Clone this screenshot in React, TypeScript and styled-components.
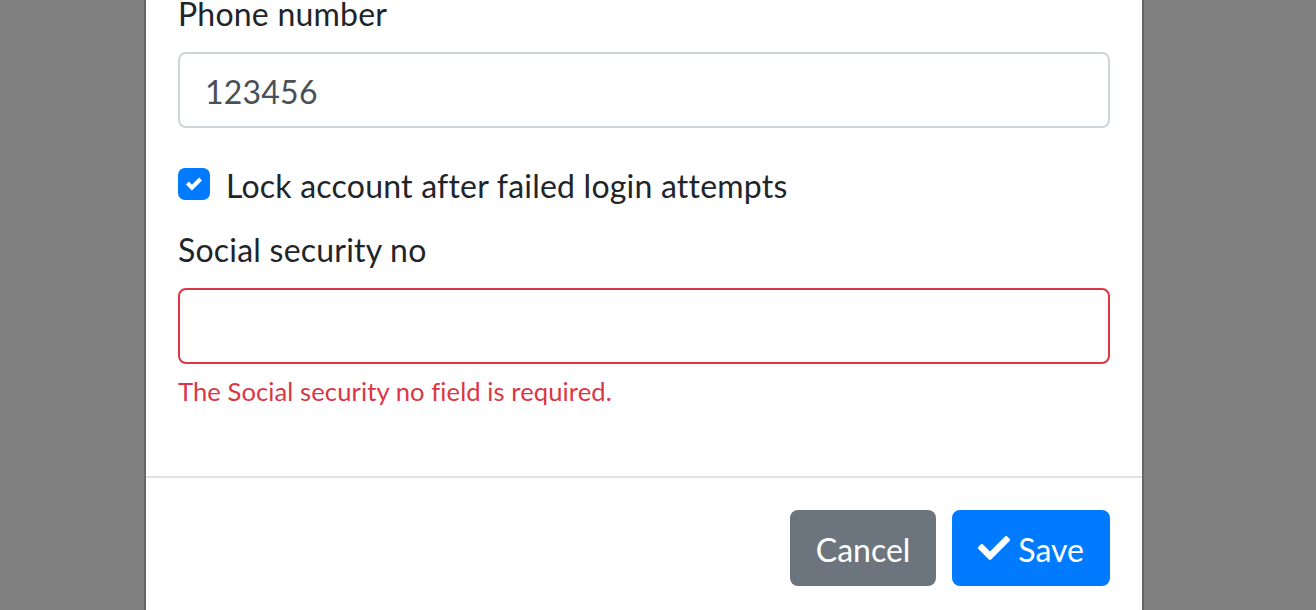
import React from "react"
import styled, { createGlobalStyle } from "styled-components"

const GlobalStyle = createGlobalStyle`
  html, body {
    margin: 0;
    padding: 0;
    height: 100%;
    overflow: hidden;
    background: #808080;
  }
  body {
    font-family: Lato, "Liberation Sans", sans-serif;
    font-size: 32px;
    line-height: 1.5;
    letter-spacing: 0.22px;
    color: #212529;
  }
`

const Backdrop = styled.div`
  width: 1288px;
  height: 610px;
  overflow: hidden;
`

const Dialog = styled.div`
  width: 1000px;
  margin: -12px auto 0;
  box-sizing: border-box;
  background: #fff;
  border-left: 2px solid #666;
  border-right: 2px solid #666;
`

const Body = styled.div`
  padding: 0 32px 34px;
`

const FormGroup = styled.div<{ $mb?: number }>`
  margin-bottom: ${(p) => p.$mb ?? 32}px;
`

const Label = styled.label`
  display: block;
  padding-top: 2px;
  margin-bottom: 14px;
`

const Input = styled.input<{ $invalid?: boolean }>`
  display: block;
  width: 100%;
  height: 76px;
  box-sizing: border-box;
  padding: 13px 24px 11px 25px;
  font-family: inherit;
  font-size: 32px;
  line-height: 1.5;
  letter-spacing: 0.22px;
  color: #495057;
  background: #fff;
  border: 2px solid ${(p) => (p.$invalid ? "#dc3545" : "#ced4da")};
  border-radius: 8px;
  outline: none;
`

const Feedback = styled.div`
  margin-top: 8px;
  font-size: 25.6px;
  letter-spacing: 0.08px;
  color: #dc3545;
`

const CheckRow = styled.div`
  display: flex;
  align-items: center;
  height: 48px;
  gap: 16px;
`

const CheckText = styled.span`
  padding-top: 4px;
`

const CheckBox = styled.span`
  display: flex;
  align-items: center;
  justify-content: center;
  width: 32px;
  height: 32px;
  border-radius: 7px;
  background: #007bff;
  flex-shrink: 0;
`

const Footer = styled.div`
  display: flex;
  justify-content: flex-end;
  gap: 16px;
  padding: 32px 32px 32px;
  border-top: 2px solid #dee2e6;
`

const Button = styled.button<{ $variant: "primary" | "secondary" }>`
  display: inline-flex;
  align-items: center;
  gap: 8px;
  height: 76px;
  padding: 14px 24px 10px;
  font-family: inherit;
  font-size: 32px;
  line-height: 1.5;
  letter-spacing: 0;
  color: #fff;
  border: 2px solid ${(p) => (p.$variant === "primary" ? "#007bff" : "#6c757d")};
  background: ${(p) => (p.$variant === "primary" ? "#007bff" : "#6c757d")};
  border-radius: 8px;
`

const CheckIcon = () => (
  <svg width="32" height="32" viewBox="0 0 512 512" fill="#fff" style={{ marginTop: -4 }}>
    <path d="M173.898 439.404l-166.4-166.4c-9.997-9.997-9.997-26.206 0-36.204l36.203-36.204c9.997-9.998 26.207-9.998 36.204 0L192 312.69 432.095 72.596c9.997-9.997 26.207-9.997 36.204 0l36.203 36.204c9.997 9.997 9.997 26.206 0 36.204l-294.4 294.401c-9.998 9.997-26.207 9.997-36.204-.001z" />
  </svg>
)

export default function App() {
  return (
    <>
      <GlobalStyle />
      <Backdrop>
        <Dialog>
          <Body>
            <FormGroup>
              <Label>Phone number</Label>
              <Input defaultValue="123456" />
            </FormGroup>
            <FormGroup $mb={16}>
              <CheckRow>
                <CheckBox>
                  <svg width="16" height="16" viewBox="0 0 8 8">
                    <path fill="#fff" d="M6.564.75l-3.59 3.612-1.538-1.55L0 4.26 2.974 7.25 8 2.193z" />
                  </svg>
                </CheckBox>
                <CheckText>Lock account after failed login attempts</CheckText>
              </CheckRow>
            </FormGroup>
            <FormGroup>
              <Label>Social security no</Label>
              <Input $invalid />
              <Feedback>The Social security no field is required.</Feedback>
            </FormGroup>
          </Body>
          <Footer>
            <Button $variant="secondary">Cancel</Button>
            <Button $variant="primary">
              <CheckIcon />
              Save
            </Button>
          </Footer>
        </Dialog>
      </Backdrop>
    </>
  )
}
